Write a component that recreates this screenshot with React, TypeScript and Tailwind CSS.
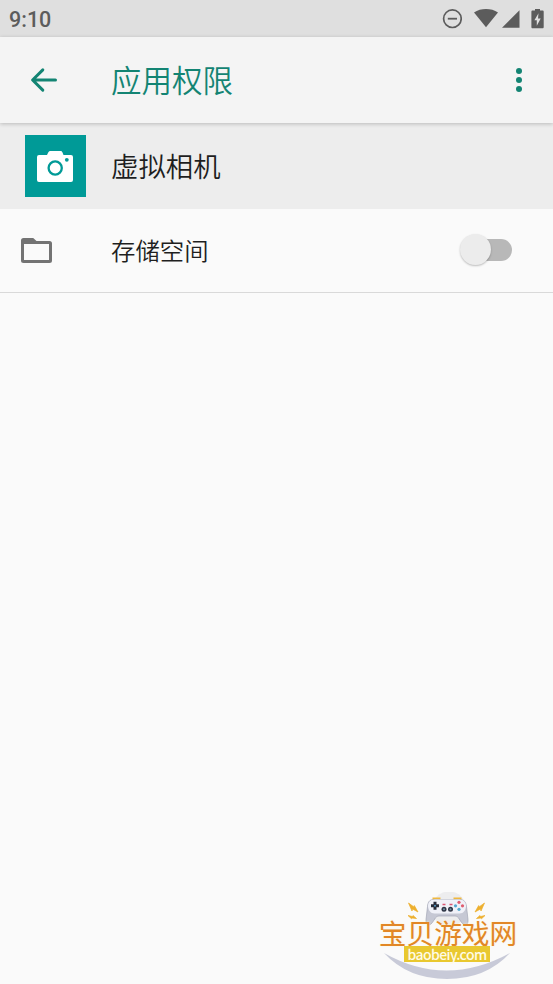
import type { ReactNode } from "react";

const CJK_FONT = "font-['Noto_Sans_CJK_SC',sans-serif]";

function StatusBar() {
  return (
    <div className="flex h-[37px] items-center justify-between bg-[#dfdfdf] pr-[9px] pl-[9px] text-[#5c5c5c]">
      <span className="pt-[2px] font-['Roboto',sans-serif] text-[21.5px] leading-none font-medium">9:10</span>
      <div className="flex items-center">
        <svg width="20" height="20" viewBox="0 0 20 20" fill="none" stroke="currentColor" className="mr-3">
          <circle cx="10.400" cy="9.700" r="8.800" strokeWidth="1.700" />
          <path d="M5.800 9.700H15" strokeWidth="1.800" />
        </svg>
        <svg width="24" height="20" viewBox="0 0 24 20" fill="currentColor" className="mr-[4px]">
          <path d="M0 3.500C3.400 1.200 7.600.1 12 .1s8.600 1.100 12 3.400L12 18.300z" />
        </svg>
        <svg width="18" height="18" viewBox="0 0 18 18" fill="currentColor" className="mr-[11px]">
          <path d="M17.500.3v17.500H0z" />
        </svg>
        <svg width="13" height="20" viewBox="0 0 13 20" fill="currentColor">
          <path d="M4 0h5v1.500h2.500c.8 0 1.200.5 1.200 1.200v15.300c0 .8-.4 1.300-1.200 1.300H1.600c-.8 0-1.200-.5-1.200-1.300V2.700c0-.7.400-1.200 1.200-1.200H4z" />
          <path d="M7.500 4.300 3.400 11.300h2.400v5.400L9.700 9.500H7z" fill="#dfdfdf" />
        </svg>
      </div>
    </div>
  );
}

function AppBar() {
  return (
    <header className="relative z-10 flex h-[86px] items-center bg-[#f4f4f4] text-[#138473] shadow-[0_1px_4px_rgba(0,0,0,0.22)]">
      <button type="button" aria-label="返回" className="ml-[30px] flex h-[28px] w-[28px] items-center justify-center">
        <svg
          width="28"
          height="26"
          viewBox="0 0 28 26"
          fill="none"
          stroke="currentColor"
          strokeWidth="3"
          strokeLinecap="round"
          strokeLinejoin="round"
        >
          <path d="M25.500 13H3M12.800 2.900 2.600 13l10.200 10.100" />
        </svg>
      </button>
      <h1 className="-mt-[2px] ml-[53px] text-[30.500px] leading-none font-[350]">应用权限</h1>
      <button type="button" aria-label="更多" className="mr-[31px] ml-auto flex flex-col gap-[3px]">
        <span className="h-[6px] w-[6px] rounded-full bg-[#138473]" />
        <span className="h-[6px] w-[6px] rounded-full bg-[#138473]" />
        <span className="h-[6px] w-[6px] rounded-full bg-[#138473]" />
      </button>
    </header>
  );
}

function AppHeader() {
  return (
    <section className="flex h-[86px] items-center bg-[#ededed]">
      <div className="ml-[24.500px] flex h-[62px] w-[61.500px] items-center justify-center bg-[#009a97]">
        <svg width="36" height="31" viewBox="0 0 36 31">
          <path
            d="M2 4h8l1.200-2.600Q12 0 13.500 0h10q1.500 0 2 1.400L26.500 4H34q2 0 2 2v23q0 2-2 2H2q-2 0-2-2V6q0-2 2-2z"
            fill="#fff"
          />
          <circle cx="18.200" cy="17" r="6.600" fill="none" stroke="#009a97" strokeWidth="2.300" />
          <circle cx="29.800" cy="8.800" r="1.900" fill="#009a97" />
        </svg>
      </div>
      <h2 className="ml-[25px] text-[27.400px] leading-none font-[350] text-[#1e1e1e]">虚拟相机</h2>
    </section>
  );
}

function PermissionRow({ icon, label }: { icon: ReactNode; label: string }) {
  return (
    <div className="flex h-[84px] items-center border-b border-[#d9d9d9]">
      <div className="ml-[21px] w-[90px]">{icon}</div>
      <span className="text-[24.400px] leading-none font-[350] text-[#1f1f1f]">{label}</span>
      <button
        type="button"
        role="switch"
        aria-checked={false}
        aria-label={label}
        className="-mt-[2px] mr-[41px] ml-auto flex h-[22px] w-[50px] items-center rounded-full bg-[#b8b8b8]"
      >
        <span className="-ml-[2px] h-[31px] w-[31px] shrink-0 rounded-full bg-[#ececec] shadow-[0_1px_2px_rgba(0,0,0,0.25)]" />
      </button>
    </div>
  );
}

function FolderIcon() {
  return (
    <svg width="31" height="25" viewBox="0 0 31 25" fill="#737373">
      <path
        fillRule="evenodd"
        d="M2.500 0h9.700l3.300 3H28.500Q31 3 31 5.500v17Q31 25 28.500 25h-26Q0 25 0 22.500v-20Q0 0 2.500 0zM3 6v16h25V6z"
      />
    </svg>
  );
}

function Gamepad() {
  return (
    <svg width="138" height="90" viewBox="0 0 138 90" className="absolute top-0 left-0">
      <circle cx="70" cy="17" r="17.500" fill="#ededee" />
      {/* shoulder buttons */}
      <path d="M54.500 8V6.500h6V8M75.500 8V6.500h6V8" stroke="#efb83e" strokeWidth="2" fill="none" />
      <path
        d="M55 7.500h25.500c5 0 6.500 3 7 7l1.500 13c.5 5-2.500 6.500-5 4.500-3.500-3-4-8-8-8H60c-4 0-4.500 5-8 8-2.500 2-5.500.5-5-4.500l1.500-13c.4-4 1.500-7 6.500-7z"
        fill="#c6c8d4"
        stroke="#9b9eae"
        strokeWidth=".6"
      />
      <path
        d="M55.500 7.500h25c4.500 0 6.300 3 6.500 6.500-.2 4-2.500 7.500-6.500 7.500h-25c-4 0-6.300-3.500-6.500-7.500.2-3.500 2-6.500 6.500-6.500z"
        fill="#f0f1f8"
      />
      <path d="M52 13.800h8M56 9.800v8" stroke="#272b38" strokeWidth="3" />
      <circle cx="56" cy="13.800" r="1" fill="#5599c4" />
      <circle cx="65" cy="17.300" r="2.500" fill="#303544" />
      <circle cx="71.500" cy="17.300" r="2.500" fill="#303544" />
      <circle cx="65" cy="17.300" r="1" fill="#6c92a8" />
      <circle cx="71.500" cy="17.300" r="1" fill="#6c92a8" />
      <path d="M63.500 12.500h3M70.500 12.500h3" stroke="#db5672" strokeWidth="1.500" />
      <circle cx="80" cy="10.300" r="1.600" fill="#df5d70" />
      <circle cx="80" cy="17.300" r="1.600" fill="#56a8cc" />
      <circle cx="76.500" cy="13.800" r="1.600" fill="#54a9cf" />
      <circle cx="83.500" cy="13.800" r="1.600" fill="#df5d70" />
      {/* sparks */}
      <g fill="#edaf2d" stroke="#edaf2d" strokeWidth=".7" strokeLinejoin="round">
        <path d="m29.500 11 5.500 4 .3-1.500 3.700 6.500-5.500-3-.5 2z" />
        <path d="m29 23.500 4.500 1 .5-1 3.500 3-4.500-.5-.5.800z" />
        <path d="m105.500 11-5.500 4-.3-1.500L96 20l5.500-3 .5 2z" />
        <path d="m106 23.500-4.500 1-.5-1-3.500 3 4.500-.5.500.800z" />
      </g>
      <path d="M5 61q62 35 126 0-24 26-63 26T5 61z" fill="#c8cad8" />
    </svg>
  );
}

function Watermark() {
  return (
    <div className="absolute top-[892px] left-[379px] h-[90px] w-[138px]">
      <Gamepad />
      <div className="relative flex flex-col items-center pt-[28px]">
        <span className="text-[27.700px] leading-[25px] whitespace-nowrap text-[#e28726] [text-shadow:0_0_2px_#fff4cf]">
          宝贝游戏网
        </span>
        <span className="mt-px mr-[2px] flex h-[16px] w-[86px] items-center justify-center bg-[#e9c82f] pb-px text-[14px] leading-[14px] font-medium tracking-[-0.600px] text-[#fffbe5]">
          baobeiy.com
        </span>
      </div>
    </div>
  );
}

export default function App() {
  return (
    <main className={`relative h-[984px] w-full overflow-hidden bg-[#fafafa] ${CJK_FONT}`}>
      <StatusBar />
      <AppBar />
      <AppHeader />
      <PermissionRow icon={<FolderIcon />} label="存储空间" />
      <Watermark />
    </main>
  );
}
